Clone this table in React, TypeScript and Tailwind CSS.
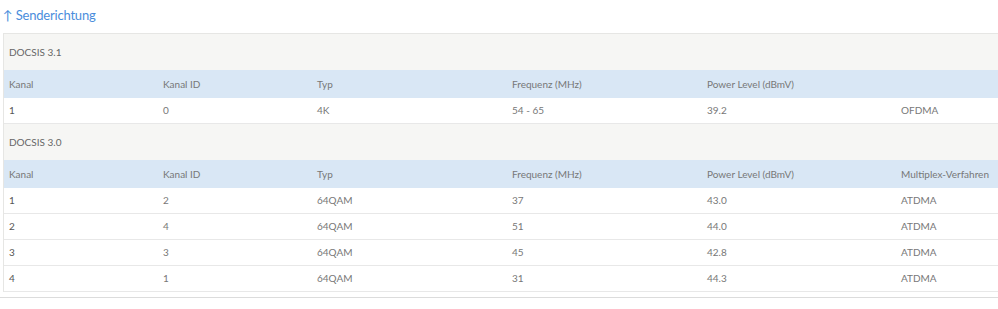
import React from "react";

const COLS = "grid grid-cols-[154px_154px_195px_195px_194px_110px]";

type Row = string[];

const gruppen: { titel: string; kopf: Row; zeilen: Row[] }[] = [
  {
    titel: "DOCSIS 3.1",
    kopf: ["Kanal", "Kanal ID", "Typ", "Frequenz (MHz)", "Power Level (dBmV)", ""],
    zeilen: [["1", "0", "4K", "54 - 65", "39.2", "OFDMA"]],
  },
  {
    titel: "DOCSIS 3.0",
    kopf: ["Kanal", "Kanal ID", "Typ", "Frequenz (MHz)", "Power Level (dBmV)", "Multiplex-Verfahren"],
    zeilen: [
      ["1", "2", "64QAM", "37", "43.0", "ATDMA"],
      ["2", "4", "64QAM", "51", "44.0", "ATDMA"],
      ["3", "3", "64QAM", "45", "42.8", "ATDMA"],
      ["4", "1", "64QAM", "31", "44.3", "ATDMA"],
    ],
  },
];

export default function App() {
  return (
    <div className="h-[309px] w-[998px] overflow-hidden bg-white font-['Source_Sans_Pro','Lato',sans-serif] text-[#777]">
      <div className="pl-[3px] pt-[6px]">
        <h2 className="h-[27px] text-[13px] leading-[18px] tracking-[-0.2px] text-[#4a8ddc]">↑ Senderichtung</h2>
        <div className="w-[1010px] border-l border-t border-[#e6e6e4]">
          {gruppen.map((g) => (
            <div key={g.titel}>
              <div className="flex h-[36px] items-center bg-[#f6f6f4] pl-[5px] text-[10px] text-[#666]">{g.titel}</div>
              <div className={`${COLS} h-[28px] items-center bg-[#d9e7f5] text-[10px] text-[#777]`}>
                {g.kopf.map((k, i) => (
                  <div key={i} className="pl-[5px] whitespace-nowrap">{k}</div>
                ))}
              </div>
              {g.zeilen.map((z, j) => (
                <div key={j} className={`${COLS} h-[26px] items-center border-b border-[#e8e8e8] text-[10px]`}>
                  {z.map((c, i) => (
                    <div key={i} className={`pl-[5px] whitespace-nowrap ${i === 0 ? "text-[#555]" : ""}`}>{c}</div>
                  ))}
                </div>
              ))}
            </div>
          ))}
        </div>
      </div>
      <div className="mt-[5px] border-t border-[#dcdcdc]" />
    </div>
  );
}
